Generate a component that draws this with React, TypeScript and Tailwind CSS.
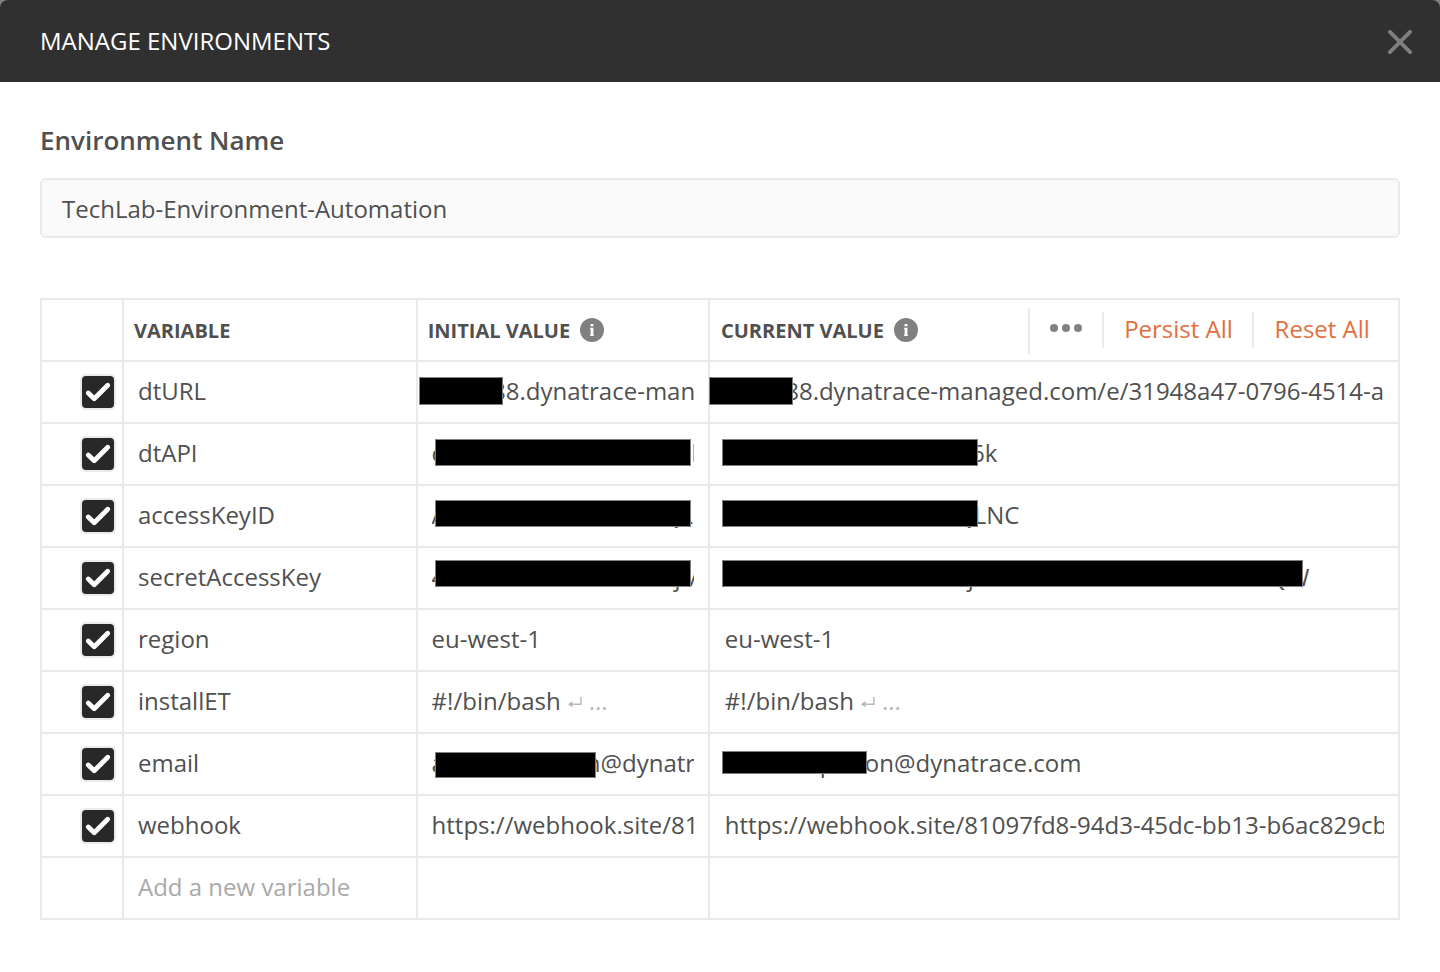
import React from "react";

type Segment = { text: string; width?: number };
type Bar = { left: number; top: number; width: number; height: number };
type Value = { segments: Segment[]; bar?: Bar; multiline?: boolean };
type Variable = { name: string; initial: Value; current: Value };

const plain = (text: string): Value => ({ segments: [{ text }] });

const variables: Variable[] = [
  {
    name: "dtURL",
    initial: {
      segments: [{ text: "", width: 60.4 }, { text: "88.dynatrace-man" }],
      bar: { left: 1, top: 15, width: 84, height: 28 },
    },
    current: {
      segments: [{ text: "", width: 60.4 }, { text: "88.dynatrace-managed.com/e/31948a47-0796-4514-a" }],
      bar: { left: -1, top: 15, width: 84, height: 28 },
    },
  },
  {
    name: "dtAPI",
    initial: {
      segments: [{ text: "c", width: 149 }, { text: "_", width: 97.3 }, { text: "6k" }],
      bar: { left: 17, top: 15, width: 256, height: 27 },
    },
    current: {
      segments: [{ text: "", width: 149 }, { text: "_", width: 97.3 }, { text: "6k" }],
      bar: { left: 12, top: 15, width: 256, height: 27 },
    },
  },
  {
    name: "accessKeyID",
    initial: {
      segments: [{ text: "A", width: 230.3 }, { text: "QLNC" }],
      bar: { left: 17, top: 14, width: 256, height: 27 },
    },
    current: {
      segments: [{ text: "", width: 230.3 }, { text: "QLNC" }],
      bar: { left: 12, top: 14, width: 256, height: 27 },
    },
  },
  {
    name: "secretAccessKey",
    initial: {
      segments: [{ text: "4", width: 243 }, { text: "j", width: 15 }, { text: "/" }],
      bar: { left: 17, top: 12, width: 256, height: 27 },
    },
    current: {
      segments: [{ text: "", width: 243 }, { text: "j", width: 300.7 }, { text: "QW" }],
      bar: { left: 12, top: 12, width: 581, height: 27 },
    },
  },
  { name: "region", initial: plain("eu-west-1"), current: plain("eu-west-1") },
  {
    name: "installET",
    initial: { segments: [{ text: "#!/bin/bash" }], multiline: true },
    current: { segments: [{ text: "#!/bin/bash" }], multiline: true },
  },
  {
    name: "email",
    initial: {
      segments: [{ text: "a", width: 95 }, { text: "p", width: 59.2 }, { text: "n@dynatrace.com" }],
      bar: { left: 17, top: 18, width: 161, height: 26 },
    },
    current: {
      segments: [{ text: "", width: 95 }, { text: "p", width: 45 }, { text: "on@dynatrace.com" }],
      bar: { left: 12, top: 17, width: 145, height: 23 },
    },
  },
  {
    name: "webhook",
    initial: plain("https://webhook.site/81"),
    current: plain("https://webhook.site/81097fd8-94d3-45dc-bb13-b6ac829cb"),
  },
];

function InfoIcon() {
  return (
    <svg width="24" height="24" viewBox="0 0 24 24" className="mb-0.5 ml-2.5 shrink-0">
      <circle cx="12" cy="12" r="12" fill="#808080" />
      <path d="M10.6 6h2.8v2.3h-2.8zM10.2 9.8h3.2v6.7h.4v1.4h-3.6v-1.4h.4v-5.3h-.4z" fill="#fff" />
    </svg>
  );
}

function ReturnIcon() {
  return (
    <svg width="14" height="12" viewBox="0 0 14 12" className="ml-[7px] mt-1 shrink-0">
      <path d="M12.9 0v7.2H3" fill="none" stroke="#b8b8b8" strokeWidth="1.4" />
      <path d="M0 7.2l4.5-3.2v6.4z" fill="#b8b8b8" />
    </svg>
  );
}

function Checkbox() {
  return (
    <span className="flex h-9 w-9 items-center justify-center rounded-[6px] border-2 border-[#eaeaea] bg-[#282828]">
      <svg width="32" height="32" viewBox="0 0 32 32">
        <path d="M6.3 17l5.9 5.7L25.7 9.3" fill="none" stroke="#fff" strokeWidth="4.8" strokeLinecap="round" strokeLinejoin="round" />
      </svg>
    </span>
  );
}

function ValueCell({ value, padding, last }: { value: Value; padding: string; last?: boolean }) {
  return (
    <div className={`relative h-[60px] min-w-0 pr-3.5 ${padding} ${last ? "" : "border-r-2 border-[#eaeaea]"}`}>
      <div className="flex h-[58px] items-center overflow-hidden whitespace-pre">
        {value.segments.map((s, i) => (
          <span key={i} className="shrink-0" style={s.width ? { width: s.width } : undefined}>
            {s.text}
          </span>
        ))}
        {value.multiline && (
          <>
            <ReturnIcon />
            <span className="ml-[7px] text-[#b8b8b8]">...</span>
          </>
        )}
      </div>
      {value.bar && <span className="absolute z-10 border border-[#808080] bg-black" style={value.bar} />}
    </div>
  );
}

const row = "grid h-[62px] grid-cols-[82px_294px_292px_1fr] border-b-2 border-[#eaeaea]";

export default function App() {
  return (
    <div className="h-[972px] w-[1440px] overflow-hidden bg-white font-['Open_Sans',sans-serif] text-[24px] leading-[32px] text-[#505050]">
      <div className="bg-[#808080]">
        <header className="flex h-[82px] items-center justify-between rounded-t-[8px] bg-[#303030] pr-7 pl-10 text-white">
          <h1>MANAGE ENVIRONMENTS</h1>
          <svg width="24" height="24" viewBox="0 0 24 24" className="mt-0.5">
            <path d="M1.9 1.9l20.2 20.2M22.1 1.9L1.9 22.1" stroke="#808080" strokeWidth="3.8" strokeLinecap="round" />
          </svg>
        </header>
      </div>
      <main className="px-10 pt-[41px]">
        <h2 className="text-[26px] font-semibold leading-[34px]">Environment Name</h2>
        <div className="mt-[21px] flex h-[60px] items-center rounded-[6px] border-2 border-[#eaeaea] bg-[#fafafa] px-5 pt-0.5">
          TechLab-Environment-Automation
        </div>
        <section className="mt-[60px] border-x-2 border-t-2 border-[#eaeaea]">
          <div className={`${row} text-[20px] font-bold`}>
            <div className="border-r-2 border-[#eaeaea]" />
            <div className="flex items-center border-r-2 border-[#eaeaea] pt-0.5 pl-2.5">VARIABLE</div>
            <div className="flex items-center border-r-2 border-[#eaeaea] pt-0.5 pl-[9.7px]">
              INITIAL VALUE
              <InfoIcon />
            </div>
            <div className="flex items-center pt-0.5 pl-[11px]">
              CURRENT VALUE
              <InfoIcon />
              <div className="mb-0.5 ml-auto flex items-center text-[24px] font-normal text-[#e0703f]">
                <span className="mt-0.5 flex h-[46px] items-center border-l-2 border-[#eaeaea] px-[19px]">
                  <svg width="34" height="8" viewBox="0 0 34 8" className="-mt-1.5">
                    <circle cx="5" cy="4" r="4" fill="#808080" />
                    <circle cx="17" cy="4" r="4" fill="#808080" />
                    <circle cx="29" cy="4" r="4" fill="#808080" />
                  </svg>
                </span>
                <span className="flex h-9 w-[150px] items-center justify-center border-l-2 border-[#eaeaea] pb-0.5 pl-px">Persist All</span>
                <span className="flex h-9 w-[146px] items-center border-l-2 border-[#eaeaea] pb-0.5 pl-[20.6px]">Reset All</span>
              </div>
            </div>
          </div>
          {variables.map((v) => (
            <div key={v.name} className={row}>
              <div className="flex items-center justify-end border-r-2 border-[#eaeaea] pr-1.5">
                <Checkbox />
              </div>
              <div className="flex items-center border-r-2 border-[#eaeaea] pb-0.5 pl-3.5">{v.name}</div>
              <ValueCell value={v.initial} padding="pl-[13.6px]" />
              <ValueCell value={v.current} padding="pl-[14.8px]" last />
            </div>
          ))}
          <div className={row}>
            <div className="border-r-2 border-[#eaeaea]" />
            <div className="flex items-center border-r-2 border-[#eaeaea] pb-0.5 pl-3.5 text-[#a9a9a9]">Add a new variable</div>
            <div className="border-r-2 border-[#eaeaea]" />
            <div />
          </div>
        </section>
      </main>
    </div>
  );
}
